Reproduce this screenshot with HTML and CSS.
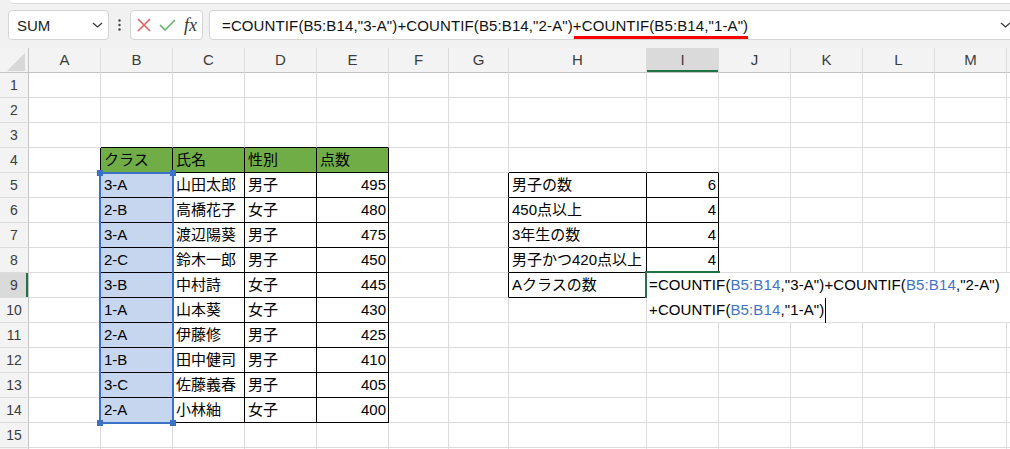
FILE: index.html
```html
<!DOCTYPE html>
<html lang="ja">
<head>
    <meta charset="UTF-8">
    <meta name="viewport" content="width=device-width, initial-scale=1.0">
    <title>COUNTIF - Aクラスの数</title>
    <link rel="stylesheet" href="styles.css">
</head>
<body>
    <div class="top">
        <div class="ribbon-edge"></div>
        <div class="formula-bar">
            <div class="name-box">
                <span>SUM</span>
                <svg width="11" height="6" viewBox="0 0 11 6"><path d="M1 1 L5.5 5 L10 1" fill="none" stroke="#333" stroke-width="1.2"/></svg>
            </div>
            <div class="grip">
                <svg width="3" height="12" viewBox="0 0 3 12"><circle cx="1.5" cy="1.5" r="1.2" fill="#444"/><circle cx="1.5" cy="6" r="1.2" fill="#444"/><circle cx="1.5" cy="10.5" r="1.2" fill="#444"/></svg>
            </div>
            <div class="fx-box">
                <svg class="cancel" width="14" height="14" viewBox="0 0 14 14"><path d="M1 1 L13 13 M13 1 L1 13" stroke="#e65a5c" stroke-width="1.5"/></svg>
                <svg class="enter" width="17" height="12" viewBox="0 0 17 12"><path d="M1 6 L6 11 L16 1" fill="none" stroke="#5bb462" stroke-width="1.5"/></svg>
                <span class="fx">fx</span>
            </div>
            <div class="formula-input">
                <span class="formula">=COUNTIF(B5:B14,"3-A")+COUNTIF(B5:B14,"2-A")<span class="marked">+COUNTIF(B5:B14,"1-A")</span></span>
                <svg class="expand" width="11" height="6" viewBox="0 0 11 6"><path d="M1 1 L5.5 5 L10 1" fill="none" stroke="#333" stroke-width="1.2"/></svg>
            </div>
        </div>
    </div>

    <div class="sheet">
        <div class="grid" id="grid"></div>

        <!-- B5:B14 reference highlight while editing -->
        <div class="range-ref">
            <i class="handle tl"></i><i class="handle tr"></i>
            <i class="handle bl"></i><i class="handle br"></i>
        </div>

        <div class="active-cell"></div>
        <div class="cell-editor">
            <div class="line">=COUNTIF(<span class="ref">B5:B14</span>,"3-A")+COUNTIF(<span class="ref">B5:B14</span>,"2-A")</div>
            <div class="line">+COUNTIF(<span class="ref">B5:B14</span>,"1-A")<span class="caret"></span></div>
        </div>
    </div>

    <script>
        // last column / row only peek in at the window edge, so no label
        const cols = [
            ['', 29], ['A', 72], ['B', 72], ['C', 72], ['D', 72], ['E', 72],
            ['F', 60], ['G', 60], ['H', 138], ['I', 72], ['J', 72], ['K', 72],
            ['L', 72], ['M', 72], ['', 72]
        ];
        const rowCount = 16;
        const lastLabelledRow = 15;

        // score table
        const students = [
            ['3-A', '山田太郎', '男子', 495],
            ['2-B', '高橋花子', '女子', 480],
            ['3-A', '渡辺陽葵', '男子', 475],
            ['2-C', '鈴木一郎', '男子', 450],
            ['3-B', '中村詩', '女子', 445],
            ['1-A', '山本葵', '女子', 430],
            ['2-A', '伊藤修', '男子', 425],
            ['1-B', '田中健司', '男子', 410],
            ['3-C', '佐藤義春', '男子', 405],
            ['2-A', '小林紬', '女子', 400]
        ];

        const cells = {
            B4: 'クラス', C4: '氏名', D4: '性別', E4: '点数',
            H5: '男子の数', I5: 6,
            H6: '450点以上', I6: 4,
            H7: '3年生の数', I7: 4,
            H8: '男子かつ420点以上', I8: 4,
            H9: 'Aクラスの数'
        };
        students.forEach((s, i) => {
            ['B', 'C', 'D', 'E'].forEach((c, j) => { cells[c + (i + 5)] = s[j]; });
        });

        // ranges drawn with thin black borders: [col1, row1, col2, row2]
        const boxed = [[2, 4, 5, 14], [8, 5, 9, 9]];
        const inBox = (c, r) => boxed.some(b => c >= b[0] && c <= b[2] && r >= b[1] && r <= b[3]);

        const grid = document.getElementById('grid');
        grid.style.gridTemplateColumns = cols.map(c => c[1] + 'px').join(' ');

        for (let r = 0; r <= rowCount; r++) {
            cols.forEach((col, c) => {
                const el = document.createElement('div');
                if (r === 0 && c === 0) {
                    el.className = 'corner';
                    el.innerHTML = '<span class="tri"></span>';
                } else if (r === 0) {
                    el.className = 'col-head';
                    if (col[0] === 'I') el.classList.add('current');
                    el.textContent = col[0];
                } else if (c === 0) {
                    el.className = 'row-head';
                    if (r === 9) el.classList.add('current');
                    if (r <= lastLabelledRow) el.textContent = r;
                } else {
                    el.className = 'cell';
                    const v = col[0] ? cells[col[0] + r] : undefined;
                    if (v !== undefined) {
                        el.textContent = v;
                        if (typeof v === 'number') el.classList.add('num');
                    }
                    if (inBox(c, r) || inBox(c + 1, r)) el.classList.add('line-r');
                    if (inBox(c, r) || inBox(c, r + 1)) el.classList.add('line-b');
                    if (r === 4 && c >= 2 && c <= 5) el.classList.add('head');
                    if (c === 2 && r >= 5 && r <= 14) el.classList.add('picked');
                }
                grid.appendChild(el);
            });
        }
    </script>
</body>
</html>
```

FILE: styles.css
```css
body {
    margin: 0;
    width: 1010px;
    height: 449px;
    overflow: hidden;
    background: #fff;
    font-family: "Liberation Sans", "Noto Sans CJK JP", sans-serif;
    font-size: 15px;
    color: #000;
}

/* formula bar */
.top {
    height: 48px;
    background: #f1f1f1;
}
.ribbon-edge {
    height: 3px;
    margin-left: 10px;
    background: #fff;
    border-bottom: 1px solid #dadada;
    border-bottom-left-radius: 6px;
}
.formula-bar {
    display: flex;
    align-items: center;
    height: 30px;
    padding: 6px 0 0 8px;
}
.name-box, .fx-box, .formula-input {
    height: 30px;
    box-sizing: border-box;
    background: #fff;
    border: 1px solid #d4d4d4;
    border-radius: 4px;
    display: flex;
    align-items: center;
}
.name-box {
    width: 101px;
    padding: 0 5px 0 8px;
    justify-content: space-between;
    color: #222;
}
.grip {
    width: 21px;
    display: flex;
    justify-content: center;
}
.fx-box {
    width: 73px;
    padding-left: 6px;
    gap: 9px;
}
.fx-box .enter { margin-left: -1px; }
.fx {
    font-family: "Liberation Serif", serif;
    font-style: italic;
    font-size: 18px;
    color: #333;
    margin-left: -1px;
}
.formula-input {
    flex: 1;
    margin-left: 6px;
    margin-right: -14px;
    padding: 0 12px 0 12px;
    justify-content: space-between;
    overflow: hidden;
}
.formula {
    letter-spacing: 0.12px;
    color: #111;
}
.marked {
    position: relative;
}
.marked::after {
    content: "";
    position: absolute;
    left: 1px;
    right: 0;
    bottom: -5px;
    height: 3px;
    background: #f00;
    box-shadow: 0 1px 2px rgba(0, 0, 0, 0.35);
}

/* sheet grid */
.sheet {
    position: relative;
}
.grid {
    display: grid;
    grid-auto-rows: 25px;
}
.grid > div {
    box-sizing: border-box;
    white-space: nowrap;
}
.corner {
    position: relative;
    background: #f3f3f3;
    border-right: 1px solid #c4c4c4;
    border-bottom: 1px solid #c4c4c4;
}
.corner .tri {
    position: absolute;
    right: 3px;
    bottom: 1px;
    width: 0;
    height: 0;
    border-left: 18px solid transparent;
    border-bottom: 18px solid #d8d8d8;
}
.col-head {
    background: #f3f3f3;
    border-right: 1px solid #dcdcdc;
    border-bottom: 1px solid #c4c4c4;
    text-align: center;
    line-height: 24px;
    color: #3c3c3c;
}
.row-head {
    background: #f3f3f3;
    border-right: 1px solid #c4c4c4;
    border-bottom: 1px solid #dcdcdc;
    text-align: center;
    line-height: 24px;
    font-size: 14px;
    color: #3c3c3c;
}
.col-head.current {
    background: #dadada;
    box-shadow: inset 0 -2px 0 #217346;
}
.row-head.current {
    background: #dadada;
    box-shadow: inset -2px 0 0 #217346;
}
.cell {
    border-right: 1px solid #dcdcdc;
    border-bottom: 1px solid #dcdcdc;
    line-height: 24px;
    padding: 0 3px;
}
.cell.num {
    text-align: right;
    padding-right: 2px;
}
.cell.line-r { border-right-color: #000; }
.cell.line-b { border-bottom-color: #000; }
.cell.head { background: #70ad47; }
.cell.picked { background: #c6d6ef; }

/* overlays shown while editing I9 */
.range-ref {
    position: absolute;
    left: 99px;
    top: 124px;
    width: 75px;
    height: 252px;
    box-sizing: border-box;
    border: 2px solid #3a72c8;
}
.handle {
    position: absolute;
    width: 6px;
    height: 6px;
    background: #3a72c8;
}
.handle.tl { left: -4px; top: -4px; }
.handle.tr { right: -4px; top: -4px; }
.handle.bl { left: -4px; bottom: -4px; }
.handle.br { right: -4px; bottom: -4px; }

.active-cell {
    position: absolute;
    left: 645px;
    top: 223px;
    width: 75px;
    height: 27px;
    box-sizing: border-box;
    border: 2px solid #217346;
}
.cell-editor {
    position: absolute;
    left: 647px;
    top: 225px;
    width: 363px;
    height: 49px;
    background: #fff;
    padding-left: 2px;
    box-sizing: border-box;
    white-space: nowrap;
    letter-spacing: 0.12px;
}
.cell-editor .line {
    height: 25px;
    line-height: 24px;
}
.ref { color: #3f74c6; }
.caret {
    display: inline-block;
    width: 1px;
    height: 25px;
    margin-left: 1px;
    background: #000;
    vertical-align: top;
}
```
